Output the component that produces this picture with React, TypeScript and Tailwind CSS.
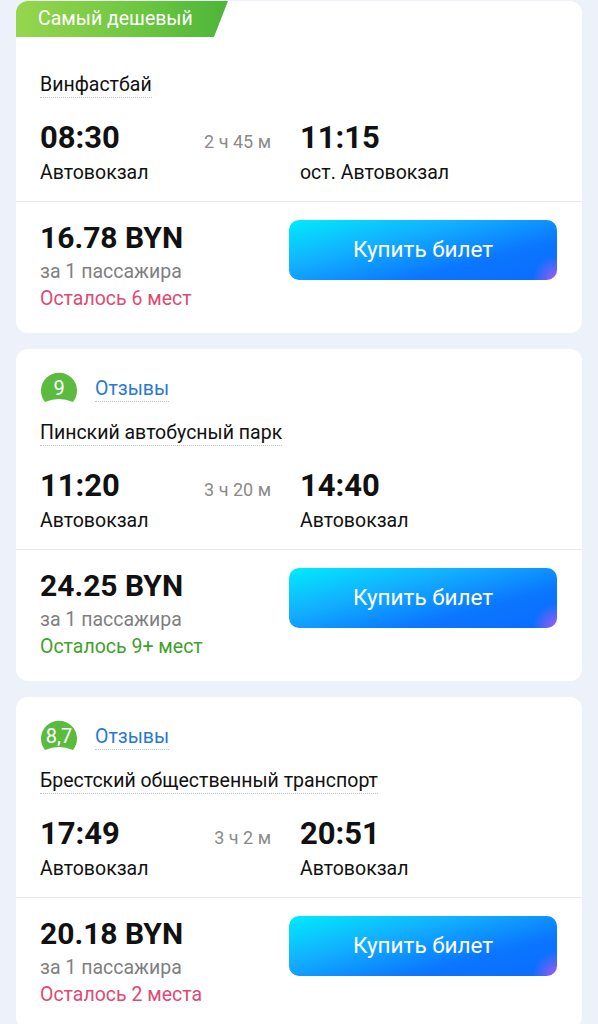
const trips = [
  {
    cheapest: true,
    rating: "",
    carrier: "Винфастбай",
    dep: "08:30",
    arr: "11:15",
    duration: "2 ч 45 м",
    from: "Автовокзал",
    to: "ост. Автовокзал",
    price: "16.78 BYN",
    seats: "Осталось 6 мест",
    seatsOk: false,
  },
  {
    cheapest: false,
    rating: "9",
    carrier: "Пинский автобусный парк",
    dep: "11:20",
    arr: "14:40",
    duration: "3 ч 20 м",
    from: "Автовокзал",
    to: "Автовокзал",
    price: "24.25 BYN",
    seats: "Осталось 9+ мест",
    seatsOk: true,
  },
  {
    cheapest: false,
    rating: "8,7",
    carrier: "Брестский общественный транспорт",
    dep: "17:49",
    arr: "20:51",
    duration: "3 ч 2 м",
    from: "Автовокзал",
    to: "Автовокзал",
    price: "20.18 BYN",
    seats: "Осталось 2 места",
    seatsOk: false,
  },
];

function RatingBadge({ value }: { value: string }) {
  return (
    <div className="relative w-[38px] h-[36px] flex items-center justify-center">
      <svg className="absolute inset-0" width="38" height="36" viewBox="0 0 38 36">
        <path d="M5 31 A18 18 0 1 1 33 31 Q19 25 5 31 Z" fill="#5bbb3f" />
      </svg>
      <span className="relative text-white text-[20px] leading-none -mt-[3px]">{value}</span>
    </div>
  );
}

function CheapestBadge() {
  return (
    <div className="h-9 w-[212px] bg-[linear-gradient(90deg,#96d64e_0%,#6cc640_60%,#4db53a_100%)] [clip-path:polygon(0_0,100%_0,calc(100%-14px)_100%,0_100%)] rounded-br-lg flex items-center pl-[22px]">
      <span className="text-white text-[19.5px] leading-none">Самый дешевый</span>
    </div>
  );
}

export default function App() {
  return (
    <div className="min-h-screen bg-[#edf1f9] px-4 pt-[1px] flex flex-col gap-4 font-['Roboto',sans-serif] text-[#111]">
      {trips.map((t, idx) => (
        <div key={idx} className="bg-white rounded-xl overflow-hidden h-[332px] flex flex-col shrink-0">
          {/* Top: badge or rating */}
          {t.cheapest ? (
            <div className="h-[60px]">
              <CheapestBadge />
            </div>
          ) : (
            <div className="h-[60px] pt-[22px] pl-6 flex items-start gap-[17px]">
              <RatingBadge value={t.rating} />
              <span className="mt-[6px] text-[19.5px] leading-[24px] text-[#2879d4] border-b border-dotted border-[#b9c3cf]">
                Отзывы
              </span>
            </div>
          )}

          {/* Carrier */}
          <div className="pl-6 mt-3">
            <span className="inline-block text-[19.5px] leading-[24px] border-b border-dotted border-[#b9c3cf]">
              {t.carrier}
            </span>
          </div>

          {/* Times */}
          <div className="pl-6 mt-[23px] flex items-baseline">
            <div className="w-[164px] font-bold text-[31px] leading-[34px]">{t.dep}</div>
            <div className="w-[67px] text-right text-[18px] text-[#8a8a8a] whitespace-nowrap">{t.duration}</div>
            <div className="ml-[29px] font-bold text-[31px] leading-[34px]">{t.arr}</div>
          </div>
          <div className="pl-6 mt-[6px] flex text-[19.5px] leading-[24px]">
            <div className="w-[260px]">{t.from}</div>
            <div>{t.to}</div>
          </div>

          {/* Divider */}
          <div className="mt-[16px] h-px bg-[#e6eaf0]" />

          {/* Price + button */}
          <div className="pl-6 pr-[25px] pt-[18px] flex justify-between">
            <div className="flex flex-col">
              <div className="font-bold text-[30px] leading-[34px] mt-[1px]">{t.price}</div>
              <div className="mt-[4px] text-[19.5px] leading-[26px] text-[#7f7f7f]">за 1 пассажира</div>
              <div
                className={
                  t.seatsOk
                    ? "mt-[1px] text-[19.5px] leading-[26px] text-[#3fa12c]"
                    : "mt-[1px] text-[19.5px] leading-[26px] text-[#df4a72]"
                }
              >
                {t.seats}
              </div>
            </div>
            <button className="w-[268px] h-[60px] rounded-[10px] bg-[radial-gradient(circle_at_100%_100%,#a55cf0_0%,rgba(120,90,245,0)_9%),linear-gradient(165deg,#00ecfb_0%,#12b0ff_35%,#0b76ff_70%,#0a6bff_100%)] text-white text-[22.5px] flex items-center justify-center">
              Купить билет
            </button>
          </div>
        </div>
      ))}
    </div>
  );
}
